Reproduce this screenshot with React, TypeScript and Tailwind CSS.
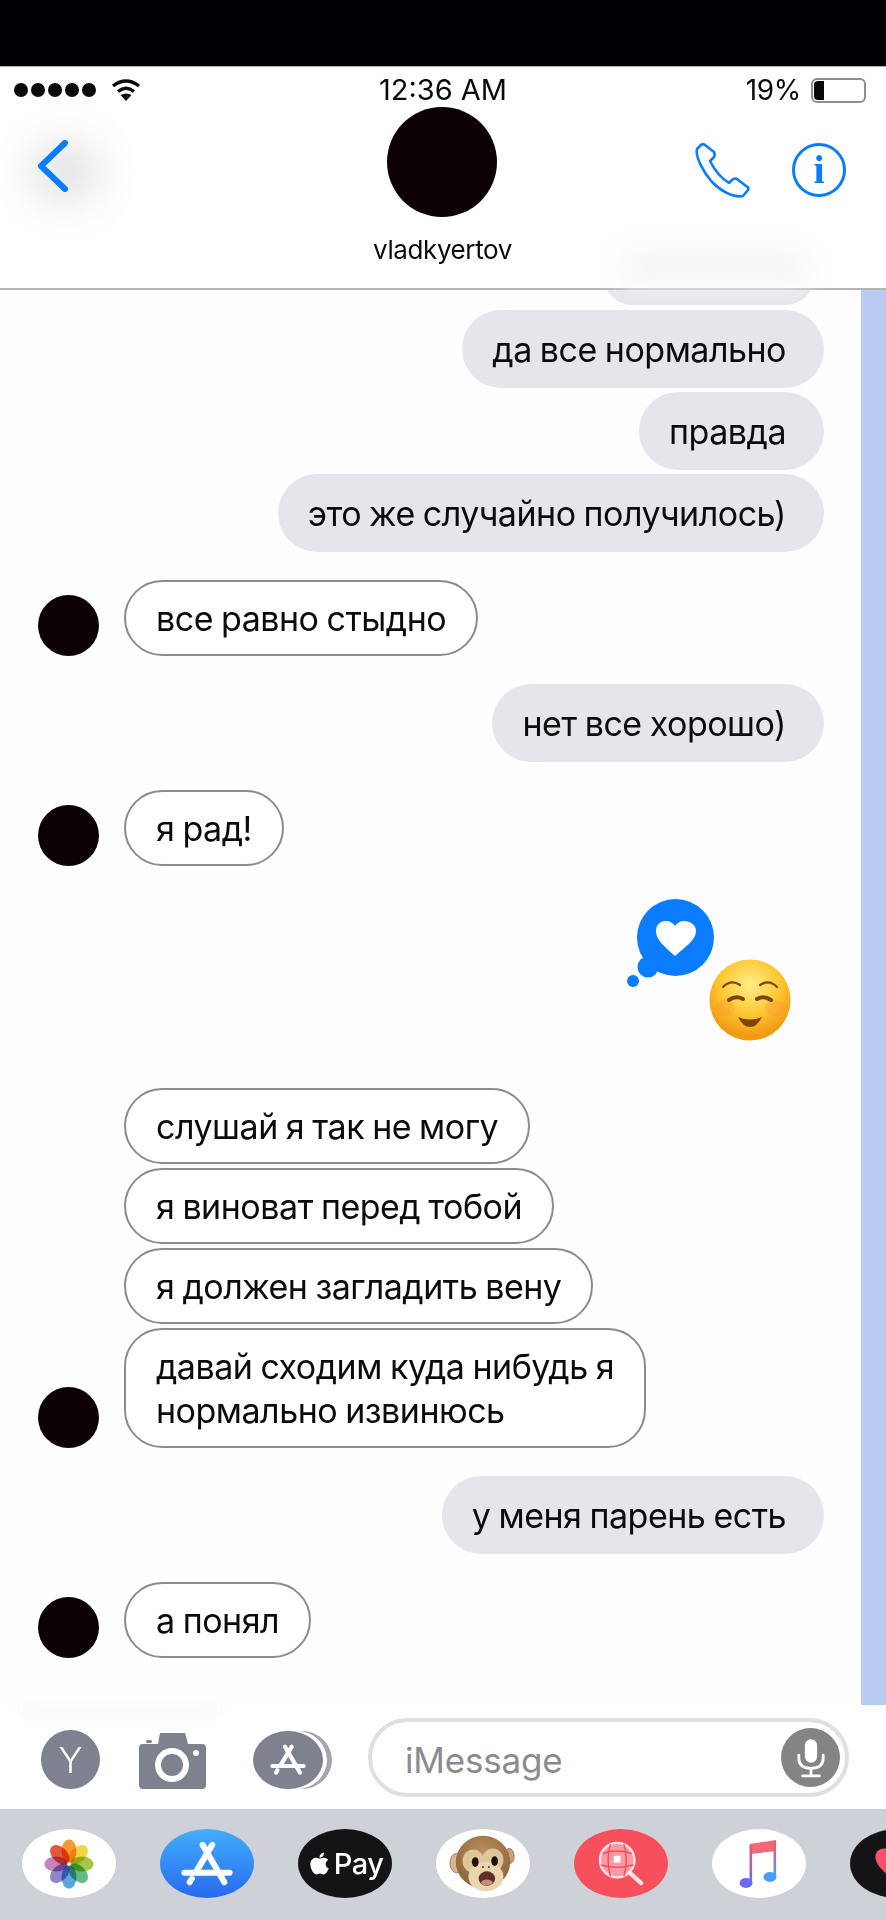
import React from "react";
import { FaApple } from "react-icons/fa";

const AVATAR = "w-[61px] h-[61px] rounded-full bg-[#0c0205] shrink-0";

function Sent({ text, className = "" }: { text: string; className?: string }) {
  return (
    <div className={`flex justify-end pr-[37px] ${className}`}>
      <div className="h-[78px] rounded-[39px] bg-[#e6e5eb] pl-[30px] pr-[38px] pt-[2px] flex items-center text-[34px] leading-[40px] tracking-[-0.5px] [word-spacing:-1px] text-[#0b0b0b] whitespace-nowrap">
        {text}
      </div>
    </div>
  );
}

function Recv({ lines, avatar = false, className = "" }: { lines: string[]; avatar?: boolean; className?: string }) {
  return (
    <div className={`flex items-end pl-[38px] ${className}`}>
      {avatar ? <div className={AVATAR} /> : <div className="w-[61px] shrink-0" />}
      <div className="ml-[25px] border-2 border-[#8c8c8e] bg-white pl-[30px] pr-[30px] pt-[15px] pb-[13px] rounded-[38px] text-[34px] leading-[44px] tracking-[-0.5px] [word-spacing:-1px] text-[#0b0b0b] whitespace-nowrap">
        {lines.map((l) => (
          <div key={l}>{l}</div>
        ))}
      </div>
    </div>
  );
}

function AppA({ color = "white", className = "" }: { color?: string; className?: string }) {
  return (
    <svg viewBox="0 0 60 52" className={className} fill="none" stroke={color} strokeLinecap="round">
      <path d="M36 4 L18 34" strokeWidth="7" />
      <path d="M25 4 L50 47" strokeWidth="7" />
      <path d="M4 36 H56" strokeWidth="7" />
      <path d="M12.5 43 L10 47" strokeWidth="7" />
    </svg>
  );
}

function Pill({ className, children }: { className: string; children?: React.ReactNode }) {
  return (
    <div className={`w-[94px] h-[69px] rounded-[50%] flex items-center justify-center shrink-0 ${className}`}>{children}</div>
  );
}

function Flower() {
  const colors = ["#f59a35", "#f3d544", "#a3c64b", "#66bb85", "#5aa6e0", "#8b86c9", "#c585bc", "#e4573c"];
  return (
    <svg viewBox="-25 -25 50 50" className="w-[50px] h-[50px]">
      {colors.map((c, i) => (
        <ellipse key={c} cx="0" cy="-13" rx="7.5" ry="11.5" fill={c} className="mix-blend-multiply" transform={`rotate(${i * 45})`} />
      ))}
      <circle r="1.5" fill="white" />
    </svg>
  );
}

function Monkey() {
  return (
    <svg viewBox="0 0 70 60" className="w-[68px] h-[62px]">
      <defs>
        <radialGradient id="mk" cx="50%" cy="30%" r="70%">
          <stop offset="0%" stopColor="#b98d5c" />
          <stop offset="100%" stopColor="#8a6338" />
        </radialGradient>
      </defs>
      <ellipse cx="8" cy="29" rx="7" ry="10" fill="#d9b48f" stroke="#a07c55" />
      <ellipse cx="62" cy="22" rx="5" ry="8" fill="#c89f73" stroke="#a07c55" />
      <ellipse cx="35" cy="28" rx="28" ry="27" fill="url(#mk)" />
      <ellipse cx="25" cy="27" rx="11" ry="12" fill="#dfc698" />
      <ellipse cx="45" cy="26" rx="11" ry="12" fill="#dfc698" />
      <ellipse cx="38" cy="43" rx="18" ry="15" fill="#e9d6ae" />
      <ellipse cx="27" cy="28" rx="3.5" ry="5" fill="#1d120e" />
      <ellipse cx="47" cy="27" rx="3.5" ry="5" fill="#1d120e" />
      <circle cx="35" cy="33" r="1" fill="#4a3322" />
      <circle cx="41" cy="33" r="1" fill="#4a3322" />
      <ellipse cx="39" cy="45" rx="8.5" ry="7.5" fill="#5a2f2c" />
      <ellipse cx="39" cy="49" rx="6" ry="3" fill="#c98a80" />
    </svg>
  );
}

function GlobeSearch() {
  return (
    <svg viewBox="0 0 48 48" className="w-[46px] h-[46px]">
      <circle cx="20" cy="20" r="18" fill="#fb9aa3" stroke="#fbe4e4" strokeWidth="2.5" />
      <g stroke="#ef4d5a" strokeWidth="1.5" fill="none">
        <path d="M5 13 Q20 8 35 13" />
        <path d="M3 25 Q20 30 37 25" />
        <path d="M13 3 Q8 20 13 37" />
        <path d="M27 3 Q32 20 27 37" />
      </g>
      <rect x="16.5" y="15.5" width="7" height="7" fill="white" />
      <path d="M33 33 L45 44" stroke="#fbe4e4" strokeWidth="4.5" strokeLinecap="round" />
    </svg>
  );
}

function Music() {
  return (
    <svg viewBox="0 0 40 50" className="w-[40px] h-[50px]">
      <defs>
        <linearGradient id="mu" x1="0" y1="0" x2="0" y2="1">
          <stop offset="0%" stopColor="#f4566c" />
          <stop offset="100%" stopColor="#6a6cf0" />
        </linearGradient>
        <linearGradient id="mu2" x1="0" y1="0" x2="0" y2="1">
          <stop offset="0%" stopColor="#f4566c" />
          <stop offset="100%" stopColor="#4c9df5" />
        </linearGradient>
      </defs>
      <path d="M11 5 L37 1 V12 L11 15 Z" fill="#f26878" />
      <rect x="10.5" y="6" width="2.6" height="38" fill="url(#mu)" />
      <rect x="34.5" y="2" width="2.6" height="36" fill="url(#mu2)" />
      <ellipse cx="7" cy="44" rx="6.5" ry="5" fill="#6a6cf0" />
      <ellipse cx="31" cy="38" rx="6.5" ry="5" fill="#4c9df5" />
    </svg>
  );
}

function Smile() {
  return (
    <svg viewBox="0 0 82 82" className="w-[82px] h-[82px]">
      <defs>
        <radialGradient id="fa" cx="50%" cy="32%" r="62%">
          <stop offset="0%" stopColor="#ffee8a" />
          <stop offset="60%" stopColor="#fdc630" />
          <stop offset="100%" stopColor="#f29a12" />
        </radialGradient>
      </defs>
      <circle cx="41" cy="41" r="40.5" fill="url(#fa)" />
      <ellipse cx="16" cy="49" rx="10" ry="8" fill="#f9923c" opacity="0.3" />
      <ellipse cx="66" cy="49" rx="10" ry="8" fill="#f9923c" opacity="0.3" />
      <g fill="none" stroke="#7d4608" strokeLinecap="round">
        <path d="M14 28 Q22 20 31 26" strokeWidth="2.2" />
        <path d="M51 26 Q60 20 68 28" strokeWidth="2.2" />
        <path d="M20 41 Q27 36 34 40" strokeWidth="4" />
        <path d="M48 40 Q55 36 62 41" strokeWidth="4" />
      </g>
      <path d="M29 58 Q41 63 53 58 Q48 68 41 68 Q34 68 29 58 Z" fill="#7d4608" />
    </svg>
  );
}

export default function App() {
  return (
    <div className="relative w-[886px] h-[1920px] overflow-hidden bg-white flex flex-col font-['Inter','Liberation_Sans',sans-serif]">
      <div className="h-[66px] bg-[#010004] shrink-0" />

      {/* header */}
      <header className="relative z-10 h-[224px] shrink-0 bg-white border-t border-t-[#b5b5b5] border-b-2 border-b-[#b4b4b6]">
        <div className="absolute left-[30px] top-[75px] w-[70px] h-[60px] rounded-full bg-[#e2e2e2] blur-[20px]" />
        <div className="absolute left-[620px] top-[180px] w-[190px] h-[40px] bg-[#f7f7f9] blur-[14px]" />
        <div className="relative flex items-center h-[46px]">
          <div className="flex items-center gap-[3px] pl-[14px]">
            {[0, 1, 2, 3, 4].map((i) => (
              <div key={i} className="w-[14px] h-[14px] rounded-full bg-[#0a0a0a]" />
            ))}
            <svg viewBox="0 0 30 22" className="ml-[12px] w-[30px] h-[22px]" fill="none" stroke="#0a0a0a" strokeWidth="3.4">
              <path d="M2 7 Q15 -3 28 7" />
              <path d="M7 12.5 Q15 6 23 12.5" />
              <path d="M15 22 L9.5 16 Q15 13 20.5 16 Z" fill="#0a0a0a" stroke="none" />
            </svg>
          </div>
          <div className="absolute left-0 right-0 text-center text-[29px] leading-[34px] text-[#0a0a0a]">12:36 AM</div>
          <div className="ml-auto flex items-center pr-[20px]">
            <span className="text-[28px] leading-[34px] tracking-[-0.3px] text-[#0a0a0a] mr-[10px]">19%</span>
            <div className="relative w-[55px] h-[25px] rounded-[6px] border-2 border-[#8f8f92] p-[1px]">
              <div className="w-[10px] h-full rounded-l-[4px] bg-[#0a0a0a]" />
            </div>
          </div>
        </div>
        <div className="relative flex items-start justify-between h-[110px] -mt-[6px]">
          <svg viewBox="0 0 32 52" className="ml-[37px] mt-[33px] w-[32px] h-[52px]" fill="none" stroke="#0a7cff" strokeWidth="6" strokeLinecap="round" strokeLinejoin="round">
            <path d="M28 3 L4 26 L28 49" />
          </svg>
          <div className="absolute left-[387px] top-0 w-[110px] h-[110px] rounded-full bg-[#0c0205]" />
          <div className="flex items-start pr-[40px] mt-[36px] gap-[42px]">
            <svg viewBox="0 0 55 55" className="w-[55px] h-[55px]" fill="none" stroke="#0a7cff" strokeWidth="2.6" strokeLinejoin="round">
              <path d="M6 2 L2 6 C0 14 9 30 17 39 C26 48 38 55 48 53 L53 47 C54 45 53 44 51 43 L42 36 C40 35 39 35 37 37 L34 40 C26 35 19 26 15 18 L19 14 C20 12 20 11 19 9 L10 2 C9 1 7 1 6 2 Z" />
            </svg>
            <div className="w-[54px] h-[54px] rounded-full border-[3px] border-[#0a7cff] flex items-center justify-center text-[#0a7cff] text-[40px] leading-none font-bold font-['Liberation_Serif',serif]">
              i
            </div>
          </div>
        </div>
        <div className="relative text-center text-[26px] leading-[32px] tracking-[-0.4px] mt-[17px] text-[#0a0a0a] -ml-[1px]">vladkyertov</div>
      </header>

      {/* conversation */}
      <main className="flex-1 min-h-0 flex overflow-hidden">
        <div className="flex-1 flex flex-col bg-[#fefefe]">
          <div className="flex justify-end pr-[46px]">
            <div className="-mt-[20px] w-[212px] h-[35px] rounded-b-[30px] bg-[#e6e5eb]" />
          </div>
          <Sent text="да все нормально" className="mt-[5px]" />
          <Sent text="правда" className="mt-[4px]" />
          <Sent text="это же случайно получилось)" className="mt-[4px]" />
          <Recv lines={["все равно стыдно"]} avatar className="mt-[28px]" />
          <Sent text="нет все хорошо)" className="mt-[28px]" />
          <Recv lines={["я рад!"]} avatar className="mt-[28px]" />

          <div className="relative h-[222px] shrink-0">
            <svg viewBox="0 0 100 100" className="absolute left-[624px] top-[28px] w-[100px] h-[100px]">
              <circle cx="51.5" cy="43.5" r="38.5" fill="#0a7cff" />
              <circle cx="24" cy="73" r="10.5" fill="#0a7cff" />
              <circle cx="9" cy="87" r="6" fill="#0a7cff" />
              <path d="M51 62 C40 52 32 46 32 37 C32 30 37 27 42 27 C46 27 49 29 51 32 C53 29 56 27 60 27 C65 27 72 30 72 37 C72 46 62 52 51 62 Z" fill="white" />
            </svg>
            <div className="absolute left-[709px] top-[93px]">
              <Smile />
            </div>
          </div>

          <Recv lines={["слушай я так не могу"]} />
          <Recv lines={["я виноват перед тобой"]} className="mt-[4px]" />
          <Recv lines={["я должен загладить вену"]} className="mt-[4px]" />
          <Recv lines={["давай сходим куда нибудь я", "нормально извинюсь"]} avatar className="mt-[4px]" />
          <Sent text="у меня парень есть" className="mt-[28px]" />
          <Recv lines={["а понял"]} avatar className="mt-[28px]" />
        </div>
        <div className="w-[25px] shrink-0 bg-[#b8cbf1]" />
      </main>

      {/* composer */}
      <div className="h-[104px] shrink-0 bg-white flex items-start relative">
        <div className="absolute left-[20px] top-0 w-[200px] h-[10px] bg-[#f7f7f8] blur-[6px]" />
        <div className="relative ml-[41px] mt-[25px] w-[59px] h-[59px] rounded-full bg-[#7e828e] flex items-center justify-center text-white text-[36px] font-light">Y</div>
        <svg viewBox="0 0 67 56" className="relative ml-[39px] mt-[28px] w-[67px] h-[56px]">
          <path d="M4 11 H19 L21 0 H46 L49 11 H63 Q67 11 67 15 V52 Q67 56 63 56 H4 Q0 56 0 52 V15 Q0 11 4 11 Z" fill="#7e828e" />
          <rect x="7" y="7" width="6" height="3" rx="1.5" fill="#7e828e" />
          <circle cx="33" cy="32" r="14" fill="none" stroke="white" strokeWidth="6" />
          <circle cx="57" cy="20" r="3" fill="white" />
        </svg>
        <div className="relative ml-[47px] mt-[26px] w-[79px] h-[58px]">
          <div className="absolute right-0 top-0 w-[60px] h-[58px] rounded-[50%] bg-[#a3a6b0]" />
          <div className="absolute right-[5px] top-0 w-[60px] h-[58px] rounded-[50%] bg-white" />
          <div className="absolute left-0 top-0 w-[70px] h-[58px] rounded-[50%] bg-[#7e828e] flex items-center justify-center">
            <AppA className="w-[36px] h-[32px]" />
          </div>
        </div>
        <div className="relative ml-[36px] mt-[13px] w-[481px] h-[79px] rounded-[40px] border-4 border-[#dfdfe3] bg-white flex items-center pl-[33px] pr-[5px]">
          <span className="text-[35px] leading-[44px] tracking-[-0.2px] text-[#8b8b8f] mt-[4px]">iMessage</span>
          <div className="ml-auto w-[59px] h-[59px] rounded-full bg-[#848486] flex items-center justify-center">
            <svg viewBox="0 0 32 42" className="w-[30px] h-[40px]" fill="none" stroke="white" strokeWidth="3" strokeLinecap="round">
              <rect x="9.5" y="1" width="13" height="25" rx="6.5" fill="white" stroke="none" />
              <path d="M3 18 V21 Q3 32 16 32 Q29 32 29 21 V18" />
              <path d="M16 32 V40 M7 40 H25" />
            </svg>
          </div>
        </div>
      </div>

      {/* app dock */}
      <div className="h-[111px] shrink-0 bg-[#cfd1d8] flex items-start pt-[20px] pl-[22px] gap-[44px] overflow-hidden">
        <Pill className="bg-white"><Flower /></Pill>
        <Pill className="bg-gradient-to-b from-[#45adfb] to-[#2a69ee]"><AppA className="w-[52px] h-[46px]" /></Pill>
        <Pill className="bg-[#141315] text-white">
          <FaApple className="text-[25px]" />
          <span className="text-[29px] leading-none font-medium ml-[2px] tracking-[-0.5px]">Pay</span>
        </Pill>
        <Pill className="bg-white"><Monkey /></Pill>
        <Pill className="bg-[#f5505c]"><GlobeSearch /></Pill>
        <Pill className="bg-white"><Music /></Pill>
        <Pill className="bg-[#141315] justify-start pl-[24px]">
          <svg viewBox="0 0 24 24" className="w-[34px] h-[34px]"><path d="M12 22 C4 15 1 11 1 7 C1 3 4 1 7 1 C9 1 11 2 12 4 C13 2 15 1 17 1 C20 1 23 3 23 7 C23 11 20 15 12 22 Z" fill="#f9506a" /></svg>
        </Pill>
      </div>
    </div>
  );
}
